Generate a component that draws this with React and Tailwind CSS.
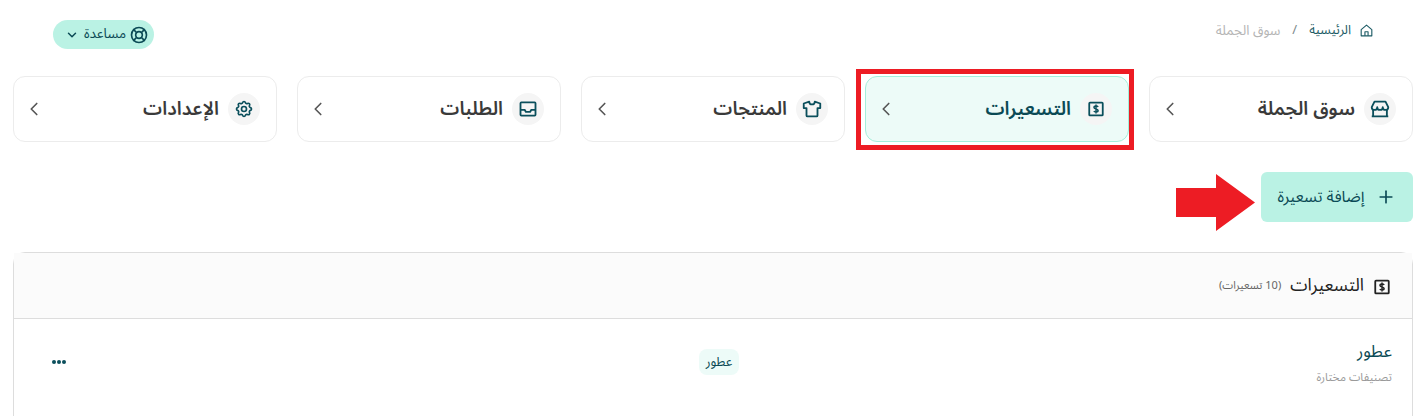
import { ChevronDown, ChevronLeft, Plus } from 'lucide-react'
import { TbLifebuoy, TbSettings, TbShirt } from 'react-icons/tb'

const FONT = "font-['Noto_Sans_Arabic','Noto_Sans','DejaVu_Sans',sans-serif]"

function StoreIcon() {
  return (
    <svg viewBox="0 0 24 24" className="h-[22px] w-[22px]" fill="none" stroke="currentColor" strokeWidth="2" strokeLinejoin="round">
      <path d="M6 4h12l3 6a3 3 0 0 1-6 0 3 3 0 0 1-6 0 3 3 0 0 1-6 0z" />
      <path d="M4.500 13v7h15v-7M3 20h18" />
    </svg>
  )
}

function PriceIcon() {
  return (
    <svg viewBox="0 0 24 24" className="h-[18px] w-[18px]" fill="none" stroke="currentColor" strokeWidth="2.400">
      <rect x="3" y="3.500" width="18" height="17" rx="1" />
      <path d="M14.800 9.300c-.4-.9-1.400-1.300-2.800-1.300-1.600 0-2.700.8-2.700 1.900 0 2.600 5.500 1.400 5.500 4.100 0 1.100-1.100 1.900-2.800 1.900-1.400 0-2.400-.4-2.800-1.300M12 6v12" strokeWidth="2" />
    </svg>
  )
}

function TrayIcon() {
  return (
    <svg viewBox="0 0 24 24" className="h-5 w-5" fill="none" stroke="currentColor" strokeWidth="2.200" strokeLinejoin="round">
      <rect x="3" y="4" width="18" height="16" rx="1" />
      <path d="M3 13h5l1.500 2.500h5L16 13h5" />
    </svg>
  )
}

function HomeIcon() {
  return (
    <svg viewBox="0 0 24 24" className="h-[15px] w-[15px]" fill="none" stroke="currentColor" strokeWidth="1.800" strokeLinejoin="round">
      <path d="M3.500 10.500 12 3.500l8.500 7V20.500h-17z" />
      <path d="M9.500 20.500V14h5v6.500" />
    </svg>
  )
}

const tabs = [
  { label: 'سوق الجملة', icon: <StoreIcon /> },
  { label: 'التسعيرات', icon: <PriceIcon />, active: true },
  { label: 'المنتجات', icon: <TbShirt className="h-[22px] w-[22px]" /> },
  { label: 'الطلبات', icon: <TrayIcon /> },
  { label: 'الإعدادات', icon: <TbSettings className="h-[20px] w-[20px]" /> },
]

function Tab({ tab }) {
  return (
    <div className={tab.active ? 'relative flex-1' : 'flex-1'}>
      <div
        className={`flex h-[66px] items-center justify-between rounded-xl border pl-[9px] pr-4 ${
          tab.active ? 'border-[#a5eedb] bg-[#edfbf8] text-[#0b4a55]' : 'border-[#ececec] bg-white text-[#3a3a3a]'
        }`}
      >
        <div className="flex items-center gap-[9px]">
          <span className="flex h-8 w-8 items-center justify-center rounded-full bg-[#f5f5f5] text-[#0b4f5c]">{tab.icon}</span>
          <span className="text-[19px] font-semibold leading-none">{tab.label}</span>
        </div>
        <ChevronLeft className="h-[22px] w-[22px] text-[#555555]" strokeWidth={1.800} />
      </div>
      {tab.active && <div className="absolute -top-[7px] -bottom-[8px] -left-[9px] -right-[5px] border-[5px] border-[#ed1c24]" />}
    </div>
  )
}

export default function App() {
  return (
    <div dir="rtl" className={`h-[416px] w-[1424px] overflow-hidden bg-white pl-[13px] pr-[11px] ${FONT}`}>
      <div className="flex h-[76px] items-start justify-between">
        <nav className="mt-[23px] flex items-center gap-2 pr-[39px] text-[13px] leading-none">
          <span className="flex items-center gap-2 text-[#1d5c66]">
            <HomeIcon />
            الرئيسية
          </span>
          <span className="px-1 text-[#7d8a8c]">/</span>
          <span className="text-[13.500px] text-[#b5b5b5]">سوق الجملة</span>
        </nav>
        <button className="ml-[40px] mt-[20px] flex h-[29px] w-[101px] items-center gap-[3px] rounded-full bg-[#baf2e4] pr-[5px] text-[13.500px] text-[#0b4a55]">
          <TbLifebuoy className="h-5 w-5" />
          مساعدة
          <ChevronDown className="mr-[2px] h-[14px] w-[14px]" strokeWidth={2.500} />
        </button>
      </div>

      <div className="flex gap-5">
        {tabs.map((tab) => (
          <Tab key={tab.label} tab={tab} />
        ))}
      </div>

      <div className="mt-[30px] flex items-start gap-[6px]">
        <button className="flex h-[50px] w-[152px] items-center justify-center gap-[12px] rounded-md bg-[#baf2e4] text-base text-[#0b4a55]">
          <Plus className="h-5 w-5" strokeWidth={2} />
          إضافة تسعيرة
        </button>
        <svg viewBox="0 0 79 57" className="mt-[2px] h-[57px] w-[79px]">
          <path d="M79 28.500 40 0v14H0v29h40v14z" fill="#ed1c24" />
        </svg>
      </div>

      <section className="mt-[21px] h-[200px] rounded-t-xl border border-[#dddddd]">
        <header className="flex h-[66px] items-center gap-[9px] border-b border-[#dddddd] bg-[#fbfbfb] px-[21px] pt-[2px] text-[#222222]">
          <PriceIcon />
          <span className="text-[17.500px]">التسعيرات</span>
          <span className="text-[11px] text-[#666666]">(10 تسعيرات)</span>
        </header>
        <div className="flex items-start justify-between px-5 pt-[23px]">
          <div className="w-[306px]">
            <div className="text-[17px] leading-5 text-[#0b4a55]">عطور</div>
            <div className="mt-[7px] text-[11.500px] leading-4 text-[#9a9a9a]">تصنيفات مختارة</div>
          </div>
          <span className="mt-[7px] rounded-lg bg-[#edfbf8] px-[7px] py-1 text-[13px] leading-[18px] text-[#0b4a55]">عطور</span>
          <div className="ml-[18px] flex w-[300px] justify-end gap-[1px] pt-[18px]">
            <span className="h-1 w-1 rounded-full bg-[#0b4f5c]" />
            <span className="h-1 w-1 rounded-full bg-[#0b4f5c]" />
            <span className="h-1 w-1 rounded-full bg-[#0b4f5c]" />
          </div>
        </div>
      </section>
    </div>
  )
}
